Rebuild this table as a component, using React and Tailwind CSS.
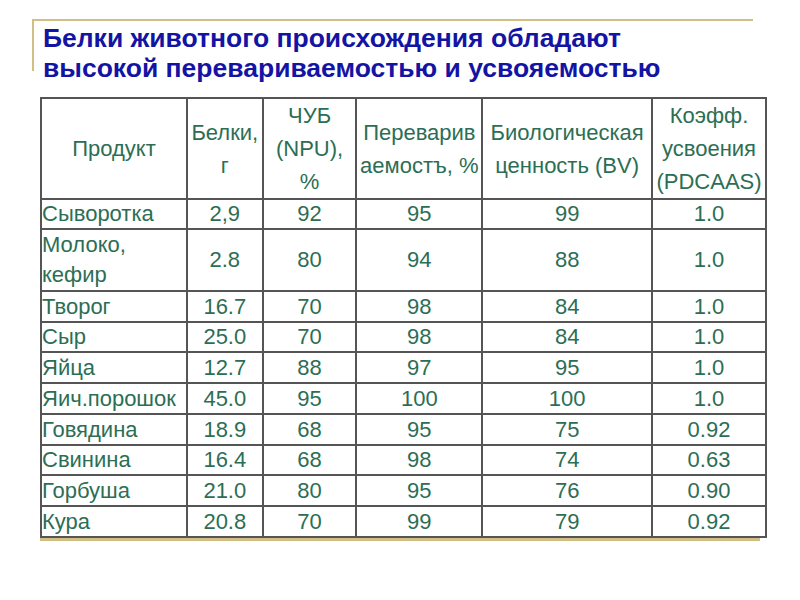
const header = [
  "Продукт",
  "Белки,\nг",
  "ЧУБ\n(NPU),\n%",
  "Переварив\nаемостъ, %",
  "Биологическая\nценность (BV)",
  "Коэфф.\nусвоения\n(PDCAAS)",
];

const rows = [
  ["Сыворотка", "2,9", "92", "95", "99", "1.0"],
  ["Молоко,\nкефир", "2.8", "80", "94", "88", "1.0"],
  ["Творог", "16.7", "70", "98", "84", "1.0"],
  ["Сыр", "25.0", "70", "98", "84", "1.0"],
  ["Яйца", "12.7", "88", "97", "95", "1.0"],
  ["Яич.порошок", "45.0", "95", "100", "100", "1.0"],
  ["Говядина", "18.9", "68", "95", "75", "0.92"],
  ["Свинина", "16.4", "68", "98", "74", "0.63"],
  ["Горбуша", "21.0", "80", "95", "76", "0.90"],
  ["Кура", "20.8", "70", "99", "79", "0.92"],
];

const widths = ["w-[146px]", "w-[76px]", "w-[94px]", "w-[126px]", "w-[170px]", "w-[114px]"];
const heights = ["h-[30px]", "h-[61px]", "h-[31px]", "h-[30px]", "h-[31px]", "h-[31px]", "h-[31px]", "h-[30px]", "h-[31px]", "h-[31px]"];

export default function App() {
  return (
    <div className="w-[800px] h-[600px] bg-white relative font-['Liberation_Sans',Arial,sans-serif]">
      <div className="pt-[19px] pl-[32px]">
        <div className="w-[721px] border-t-2 border-[#d2bf85]">
          <div className="border-l-2 border-[#d2bf85] h-[52px] absolute top-[19px] left-[32px]" />
          <h1 className="pl-[11px] pt-[2px] text-[26.5px] leading-[30px] font-bold text-[#1414a4] whitespace-nowrap">
            Белки животного происхождения обладают
            <br />
            высокой перевариваемостью и усвояемостью
          </h1>
        </div>
      </div>

      <div className="ml-[40px] mt-[14px] w-[727px]">
        <table className="table-fixed border-collapse text-[#2c6e55] text-[22px]">
          <thead>
            <tr className="h-[101px]">
              {header.map((h, i) => (
                <th
                  key={i}
                  className={`${widths[i]} border-2 border-[#555] font-normal text-center align-middle leading-[33px] whitespace-pre-line`}
                >
                  {h}
                </th>
              ))}
            </tr>
          </thead>
          <tbody>
            {rows.map((r, ri) => (
              <tr key={ri} className={heights[ri]}>
                {r.map((c, ci) => (
                  <td
                    key={ci}
                    className={`border-2 border-[#555] whitespace-pre-line ${
                      ri === 1 ? "leading-[30px]" : "leading-[28px]"
                    } ${ci === 0 ? "text-left pl-0 whitespace-nowrap" : "text-center"}`}
                  >
                    {c}
                  </td>
                ))}
              </tr>
            ))}
          </tbody>
        </table>
        <div className="w-[720px] border-t-[3px] border-[#d2bf85]" />
      </div>
    </div>
  );
}
